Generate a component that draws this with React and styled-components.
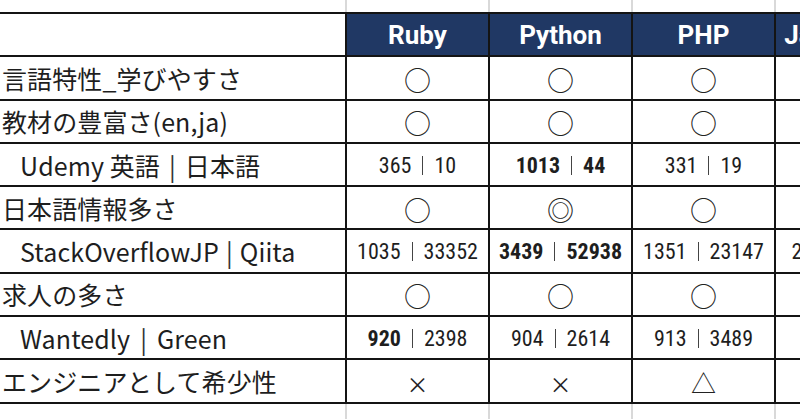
import React from "react";
import styled, { createGlobalStyle } from "styled-components";

const Global = createGlobalStyle`
  html, body { margin: 0; padding: 0; background: #fff; overflow: hidden; }
  body { width: 800px; height: 419px; -webkit-font-smoothing: antialiased; }
`;

const COLS = "345px 141px 141px 141px 141px";

const Page = styled.div`
  width: 800px;
  height: 419px;
  overflow: hidden;
  display: flex;
  flex-direction: column;
`;

const Strip = styled.div`
  display: grid;
  grid-template-columns: ${COLS};
  column-gap: 2px;
  height: ${(p) => p.$h}px;
  flex: none;
`;

const StripCell = styled.div`
  border-right: 2px solid #d9d9d9;
  margin-right: -2px;
`;

const Sheet = styled.div`
  display: grid;
  grid-template-columns: ${COLS};
  grid-auto-rows: 41.3px;
  gap: 2px;
  padding: 2px 0;
  background: #141414;
  flex: none;
`;

const Cell = styled.div`
  background: ${(p) => (p.$head ? "#203864" : "#fff")};
  display: flex;
  align-items: center;
  justify-content: center;
  overflow: hidden;
  white-space: nowrap;
`;

const LabelCell = styled(Cell)`
  justify-content: flex-start;
  padding-left: ${(p) => (p.$indent ? 20 : 2)}px;
  font-family: "Noto Sans CJK JP", "Noto Sans", sans-serif;
  font-size: 25px;
  letter-spacing: 0.1px;
  color: #1e1e1e;
`;

const Sep = styled.span`
  display: inline-block;
  margin: 0 ${(p) => p.$m}px;
  color: #333;
`;

const HeadText = styled.span`
  font-family: Roboto, "Liberation Sans", sans-serif;
  font-weight: 700;
  font-size: 26px;
  color: #fff;
`;

const Mark = styled.span`
  font-family: "Noto Sans CJK JP", sans-serif;
  font-size: ${(p) => p.$size || 27}px;
  color: #222;
  line-height: 1;
  margin-top: 3px;
`;

const Num = styled.span`
  font-family: "Liberation Sans Narrow", "Roboto Condensed", Roboto, sans-serif;
  font-size: 22px;
  color: #1e1e1e;
  display: flex;
  align-items: center;
  gap: 11px;
  margin-top: 1px;
`;

const Val = styled.span`
  font-weight: ${(p) => (p.$bold ? 700 : 400)};
`;

const Bar = styled.span`
  display: inline-block;
  width: 1px;
  height: 19px;
  background: #444;
`;

const rows = [
  { label: ["言語特性_学びやすさ"], cells: ["○", "○", "○", "○"] },
  { label: ["教材の豊富さ(en,ja)"], cells: ["○", "○", "○", "○"] },
  {
    label: ["Udemy 英語", "日本語", 9],
    indent: true,
    cells: [
      [["365"], ["10"]],
      [["1013", 1], ["44", 1]],
      [["331"], ["19"]],
      [["1142"], ["51"]],
    ],
  },
  { label: ["日本語情報多さ"], cells: ["○", "◎", "○", "◎"] },
  {
    label: ["StackOverflowJP", "Qiita", 7],
    indent: true,
    cells: [
      [["1035"], ["33352"]],
      [["3439", 1], ["52938", 1]],
      [["1351"], ["23147"]],
      [["2150"], ["8012"]],
    ],
  },
  { label: ["求人の多さ"], cells: ["○", "○", "○", "○"] },
  {
    label: ["Wantedly", "Green", 10],
    indent: true,
    cells: [
      [["920", 1], ["2398"]],
      [["904"], ["2614"]],
      [["913"], ["3489"]],
      [["540"], ["962"]],
    ],
  },
  { label: ["エンジニアとして希少性"], cells: ["×", "×", "△", "×"] },
];

const markSize = { "○": 27, "◎": 27, "×": 22, "△": 25 };

function Content({ v }) {
  if (typeof v === "string") {
    return <Mark $size={markSize[v]}>{v}</Mark>;
  }
  return (
    <Num>
      <Val $bold={v[0][1]}>{v[0][0]}</Val>
      <Bar />
      <Val $bold={v[1][1]}>{v[1][0]}</Val>
    </Num>
  );
}

function Label({ parts }) {
  if (parts.length === 1) return parts[0];
  return (
    <>
      {parts[0]}
      <Sep $m={parts[2]}>|</Sep>
      {parts[1]}
    </>
  );
}

export default function App() {
  const heads = ["Ruby", "Python", "PHP", "JavaScript"];
  return (
    <Page>
      <Global />
      <Strip $h={12}>
        {[0, 1, 2, 3, 4].map((i) => (
          <StripCell key={i} />
        ))}
      </Strip>
      <Sheet>
        <LabelCell />
        {heads.map((h) => (
          <Cell key={h} $head>
            <HeadText>{h}</HeadText>
          </Cell>
        ))}
        {rows.map((r) => (
          <React.Fragment key={r.label[0]}>
            <LabelCell $indent={r.indent}>
              <Label parts={r.label} />
            </LabelCell>
            {r.cells.map((c, i) => (
              <Cell key={i}>
                <Content v={c} />
              </Cell>
            ))}
          </React.Fragment>
        ))}
      </Sheet>
      <Strip $h={20}>
        {[0, 1, 2, 3, 4].map((i) => (
          <StripCell key={i} />
        ))}
      </Strip>
    </Page>
  );
}
